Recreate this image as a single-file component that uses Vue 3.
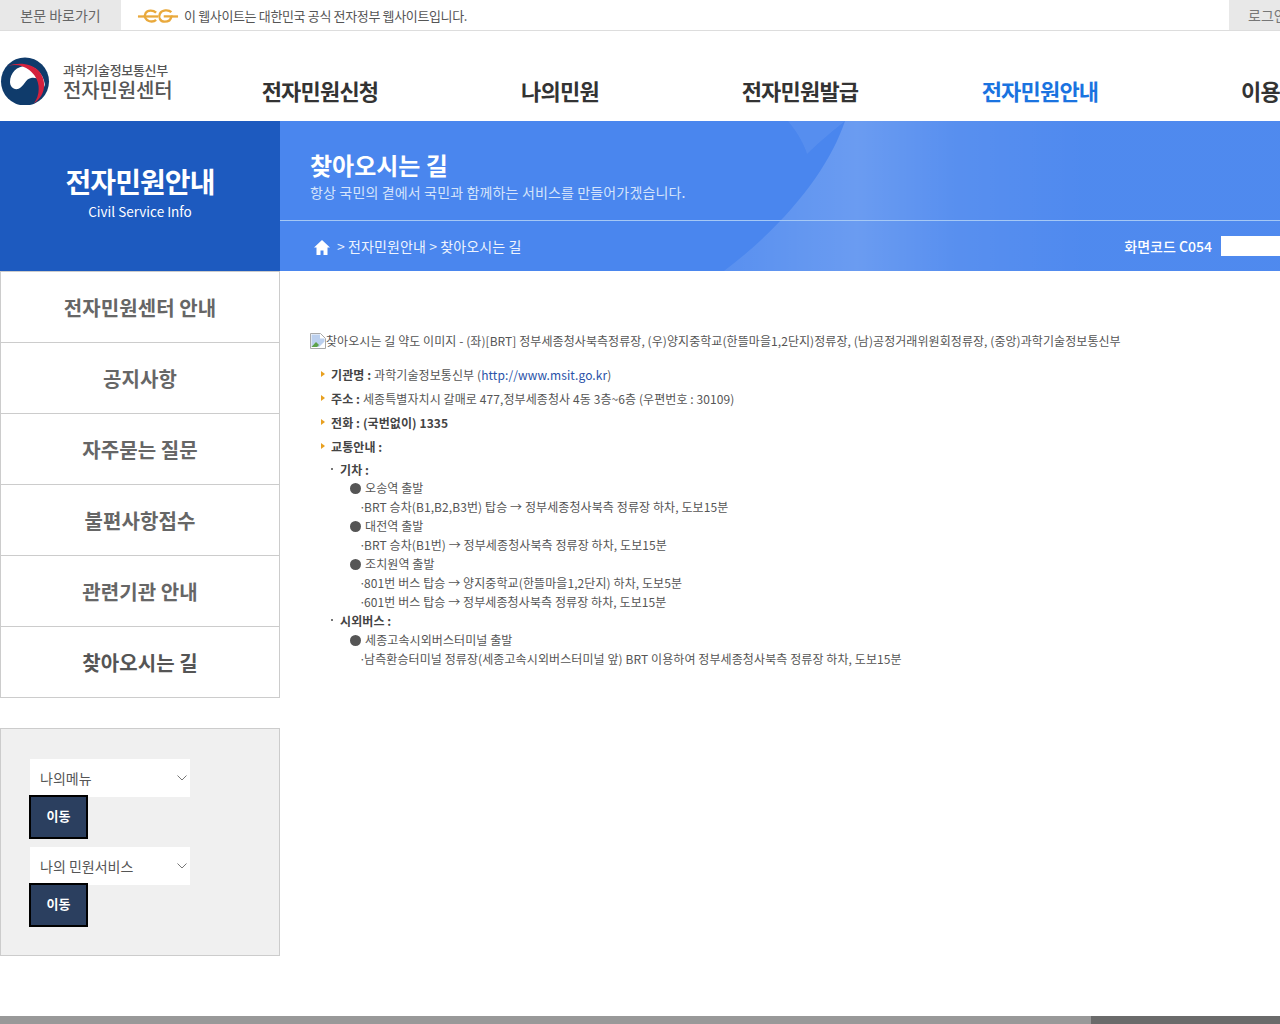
<script setup>
const nav = [
  { label: '전자민원신청' },
  { label: '나의민원' },
  { label: '전자민원발급' },
  { label: '전자민원안내', active: true },
  { label: '이용안내' },
]
const side = ['전자민원센터 안내', '공지사항', '자주묻는 질문', '불편사항접수', '관련기관 안내', '찾아오시는 길']
const selects = ['나의메뉴', '나의 민원서비스']
const routes = [
  { station: '오송역 출발', lines: ['BRT 승차(B1,B2,B3번) 탑승 → 정부세종청사북측 정류장 하차, 도보15분'] },
  { station: '대전역 출발', lines: ['BRT 승차(B1번) → 정부세종청사북측 정류장 하차, 도보15분'] },
  { station: '조치원역 출발', lines: ['801번 버스 탑승 → 양지중학교(한뜰마을1,2단지) 하차, 도보5분', '601번 버스 탑승 → 정부세종청사북측 정류장 하차, 도보15분'] },
]
</script>

<template>
  <div class="page">
    <div class="topbar">
      <a class="skip">본문 바로가기</a>
      <div class="gov">
        <svg class="eg" width="42" height="16" viewBox="0 0 44 16" fill="none" stroke="#e9a93c" stroke-width="2.4">
          <path d="M1 8.500h21" />
          <path d="M20 4.500C17 1.500 11 1.500 9 5c-2 3.500 0 7.500 4 8.500 3 .6 5.500 0 7-1.500" />
          <path d="M36 4C33 1 26 1.500 24 5.500c-2 4 .5 8.500 5 8.500 4 0 6.500-2 7-5.500H28" />
          <path d="M36 8.500h7" />
        </svg>
        <span>이 웹사이트는 대한민국 공식 전자정부 웹사이트입니다.</span>
      </div>
      <a class="login">로그인</a>
    </div>

    <header class="header">
      <div class="logo">
        <svg width="50" height="48" viewBox="0 0 50 48">
          <circle cx="25" cy="24.500" r="24" fill="#0f3b6b" />
          <path d="M10 25C10 15 18 8 28 9c10 1 17 11 17 21-3-7-8-10-14-9-6 1-7 9-13 11-5 1-8-3-8-7z" fill="#fff" />
          <path d="M8 9A24 24 0 0 1 34 46.300C46 38 47 24 39 14 31 6 18 5 8 9z" fill="#d4213d" />
        </svg>
        <div class="logo-text">
          <span class="ministry">과학기술정보통신부</span>
          <strong class="center">전자민원센터</strong>
        </div>
      </div>
      <nav class="nav">
        <a v-for="n in nav" :key="n.label" class="nav-item" :class="{ on: n.active }">{{ n.label }}</a>
      </nav>
    </header>

    <section class="hero">
      <div class="hero-left">
        <strong>전자민원안내</strong>
        <span>Civil Service Info</span>
      </div>
      <div class="hero-right">
        <svg class="deco" width="1000" height="150" viewBox="0 0 1000 150">
          <defs>
            <linearGradient id="band" gradientUnits="userSpaceOnUse" x1="440" y1="0" x2="800" y2="0">
              <stop offset="0" stop-color="#fff" stop-opacity=".08" />
              <stop offset=".38" stop-color="#fff" stop-opacity=".18" />
              <stop offset=".65" stop-color="#fff" stop-opacity=".08" />
              <stop offset="1" stop-color="#fff" stop-opacity=".03" />
            </linearGradient>
          </defs>
          <path d="M565 0C550 45 510 100 444 150H1000V0z" fill="url(#band)" />
          <path d="M508 0c10 12 17 25 19 33 13-13 28-25 38-33z" fill="#fff" opacity=".07" />
        </svg>
        <div class="hero-title">
          <h1>찾아오시는 길</h1>
          <p>항상 국민의 곁에서 국민과 함께하는 서비스를 만들어가겠습니다.</p>
        </div>
        <div class="hero-path">
          <svg class="home" width="16" height="15" viewBox="0 0 16 15" fill="#fff">
            <path d="M8 0 0 7.500h2.500V15h4v-4.500h3V15h4V7.500H16z" />
          </svg>
          <span class="crumb">&gt; 전자민원안내 &gt; 찾아오시는 길</span>
          <span class="code">화면코드 C054</span>
          <span class="code-box"></span>
        </div>
      </div>
    </section>

    <div class="body">
      <aside class="aside">
        <ul class="side">
          <li v-for="s in side" :key="s" class="side-item" :class="{ cur: s === '찾아오시는 길' }">{{ s }}</li>
        </ul>
        <div class="quick">
          <div v-for="s in selects" :key="s" class="quick-group">
            <div class="select">
              <span>{{ s }}</span>
              <svg width="10" height="6" viewBox="0 0 10 6" fill="none" stroke="#777" stroke-width="1"><path d="M.5.500 5 5 9.500.500" /></svg>
            </div>
            <button class="go" type="button">이동</button>
          </div>
        </div>
      </aside>

      <main class="main">
        <div class="map-alt">
          <svg class="broken" width="16" height="16" viewBox="0 0 16 16">
            <path d="M.5.500h10l5 5v10H.5z" fill="#fff" stroke="#a9a9a9" />
            <path d="M1.500 1.500h8.500v4h4.500v3L9 14H1.500z" fill="#bcd0ee" />
            <path d="M1.500 14 6 9l3 3-2 2z" fill="#5da24a" />
          </svg>
          <span>찾아오시는 길 약도 이미지 - (좌)[BRT] 정부세종청사북측정류장, (우)양지중학교(한뜰마을1,2단지)정류장, (남)공정거래위원회정류장, (중앙)과학기술정보통신부</span>
        </div>
        <ul class="info">
          <li><b>기관명 : </b>과학기술정보통신부 (<a class="link">http://www.msit.go.kr</a>)</li>
          <li><b>주소 : </b>세종특별자치시 갈매로 477,정부세종청사 4동 3층~6층 (우편번호 : 30109)</li>
          <li><b>전화 : (국번없이) 1335</b></li>
          <li><b>교통안내 :</b></li>
        </ul>
        <div class="traffic">
          <div class="mode first"><b>기차 :</b></div>
          <div v-for="r in routes" :key="r.station" class="route">
            <div class="station"><i class="dot"></i>{{ r.station }}</div>
            <div v-for="l in r.lines" :key="l" class="line">{{ l }}</div>
          </div>
          <div class="mode"><b>시외버스 :</b></div>
          <div class="route">
            <div class="station"><i class="dot"></i>세종고속시외버스터미널 출발</div>
            <div class="line">남측환승터미널 정류장(세종고속시외버스터미널 앞) BRT 이용하여 정부세종청사북측 정류장 하차, 도보15분</div>
          </div>
        </div>
      </main>
    </div>

    <footer class="footer"><div class="foot-a"></div><div class="foot-b"></div></footer>
  </div>
</template>

<style scoped>
.page {
  width: 1280px;
  height: 1024px;
  overflow: hidden;
  display: flex;
  flex-direction: column;
  background: #fff;
  color: #555;
  font-family: "Noto Sans CJK KR", "Noto Sans", sans-serif;
}
.topbar {
  height: 31px;
  flex: none;
  display: flex;
  box-sizing: border-box;
  border-bottom: 1px solid #ddd;
  font-size: 13px;
  line-height: 30px;
}
.skip {
  width: 121px;
  text-align: center;
  background: #e8e8e8;
  color: #666;
  font-size: 14px;
}
.gov {
  display: flex;
  align-items: center;
  padding: 1px 0 0 16px;
  box-sizing: border-box;
  flex: 1;
  gap: 5px;
  color: #555;
  letter-spacing: -.35px;
}
.login {
  width: 51px;
  background: #e8e8e8;
  color: #777;
  padding-left: 19px;
  box-sizing: border-box;
  white-space: nowrap;
  overflow: hidden;
  font-size: 14px;
}
.header {
  height: 90px;
  flex: none;
  display: flex;
}
.logo {
  width: 200px;
  flex: none;
  display: flex;
  gap: 13px;
  padding-top: 26px;
  box-sizing: border-box;
}
.logo-text {
  display: flex;
  flex-direction: column;
  padding-top: 4px;
  color: #555;
}
.ministry {
  font-size: 13px;
  line-height: 17px;
  font-weight: 500;
  letter-spacing: -.3px;
  white-space: nowrap;
}
.center {
  font-size: 20px;
  line-height: 24px;
  font-weight: 500;
  letter-spacing: -.15px;
  white-space: nowrap;
}
.nav { display: flex; flex: none; }
.nav-item {
  width: 240px;
  flex: none;
  text-align: center;
  font-size: 22px;
  font-weight: 700;
  line-height: 32px;
  padding-top: 43px;
  color: #333;
  letter-spacing: -.8px;
}
.nav-item.on { color: #1a73e0; }
.hero {
  height: 150px;
  flex: none;
  display: flex;
  color: #fff;
}
.hero-left {
  width: 280px;
  flex: none;
  background: #1d5abf;
  display: flex;
  flex-direction: column;
  align-items: center;
  padding-top: 40px;
  box-sizing: border-box;
}
.hero-left strong {
  font-size: 28px;
  line-height: 40px;
  font-weight: 700;
  letter-spacing: -.9px;
}
.hero-left span {
  font-size: 13.500px;
  line-height: 20px;
}
.hero-right {
  flex: 1;
  position: relative;
  background: #4a86ee;
  overflow: hidden;
  display: flex;
  flex-direction: column;
}
.deco { position: absolute; left: 0; top: 0; }
.hero-title {
  position: relative;
  height: 100px;
  box-sizing: border-box;
  padding: 27px 0 0 30px;
  border-bottom: 1px solid #a5c8f5;
}
.hero-title h1 {
  margin: 0;
  font-size: 24px;
  line-height: 34px;
  font-weight: 700;
}
.hero-title p {
  margin: 0;
  font-size: 14px;
  line-height: 20px;
  color: #d5e4fb;
  letter-spacing: .15px;
}
.hero-path {
  position: relative;
  height: 50px;
  box-sizing: border-box;
  padding: 0 0 1px 34px;
  display: flex;
  align-items: center;
  font-size: 14px;
  color: #eef4fe;
}
.home { margin-right: 7px; margin-top: 3px; }
.crumb { flex: 1; letter-spacing: .1px; }
.code { color: #fff; font-weight: 500; margin-right: 9px; }
.code-box { width: 59px; height: 20px; background: #fff; }
.body {
  flex: 1;
  display: flex;
  min-height: 0;
}
.aside { width: 280px; flex: none; }
.side { list-style: none; margin: 0; padding: 0; }
.side-item {
  height: 71px;
  box-sizing: border-box;
  border: 1px solid #ccc;
  border-top: 0;
  text-align: center;
  line-height: 71px;
  font-size: 20px;
  font-weight: 700;
  color: #666;
  letter-spacing: .1px;
}
.side-item:first-child { height: 72px; border-top: 1px solid #ccc; }
.side-item.cur { color: #555; }
.quick {
  margin-top: 30px;
  height: 228px;
  box-sizing: border-box;
  border: 1px solid #ccc;
  background: #f0f0f0;
  padding: 30px 0 0 28px;
}
.quick-group { height: 88px; }
.select {
  width: 160px;
  height: 38px;
  margin-left: 1px;
  background: #fff;
  box-sizing: border-box;
  padding: 0 3px 0 10px;
  display: flex;
  align-items: center;
  justify-content: space-between;
  font-size: 14px;
  color: #555;
}
.go {
  display: block;
  width: 59px;
  height: 44px;
  margin-top: -2px;
  box-sizing: border-box;
  border: 2px solid #000;
  background: #2b3f5f;
  color: #fff;
  font: 700 13px/1 "Noto Sans CJK KR", sans-serif;
  padding: 0 0 4px;
}
.main {
  flex: 1;
  padding: 60px 0 0 30px;
  font-size: 12px;
  color: #555;
  min-width: 0;
  letter-spacing: .09px;
}
.map-alt {
  display: flex;
  align-items: center;
  height: 19px;
  white-space: nowrap;
  letter-spacing: .067px;
}
.broken { flex: none; }
.info {
  list-style: none;
  margin: 13px 0 0;
  padding: 0 0 0 21px;
}
.info li {
  position: relative;
  height: 24px;
  line-height: 24px;
  white-space: nowrap;
}
.info li::before {
  content: "";
  position: absolute;
  left: -10px;
  top: 8px;
  border-left: 4px solid #e8a020;
  border-top: 3px solid transparent;
  border-bottom: 3px solid transparent;
}
.info b, .mode b { color: #444; font-weight: 700; }
.link { color: #2a52a8; }
.traffic { padding-left: 30px; }
.mode {
  position: relative;
  height: 19px;
  line-height: 19px;
}
.mode::before {
  content: "";
  position: absolute;
  left: -9px;
  top: 8px;
  width: 2px;
  height: 2px;
  background: #777;
}
.mode.first { line-height: 21px; }
.mode.first::before { top: 9px; }
.route { padding-left: 10px; }
.station, .line { height: 19px; line-height: 19px; white-space: nowrap; }
.line { padding-left: 11px; }
.line::before {
  content: "·";
  display: inline-block;
  width: 5px;
  margin-left: -2px;
}
.dot {
  display: inline-block;
  width: 11px;
  height: 11px;
  margin-right: 4px;
  border-radius: 50%;
  background: #555;
  vertical-align: -1px;
}
.footer {
  height: 8px;
  flex: none;
  display: flex;
}
.foot-a { width: 1091px; background: #999; }
.foot-b { flex: 1; background: #6b6b6b; }
</style>

<style>
html, body { margin: 0; background: #fff; }
</style>
